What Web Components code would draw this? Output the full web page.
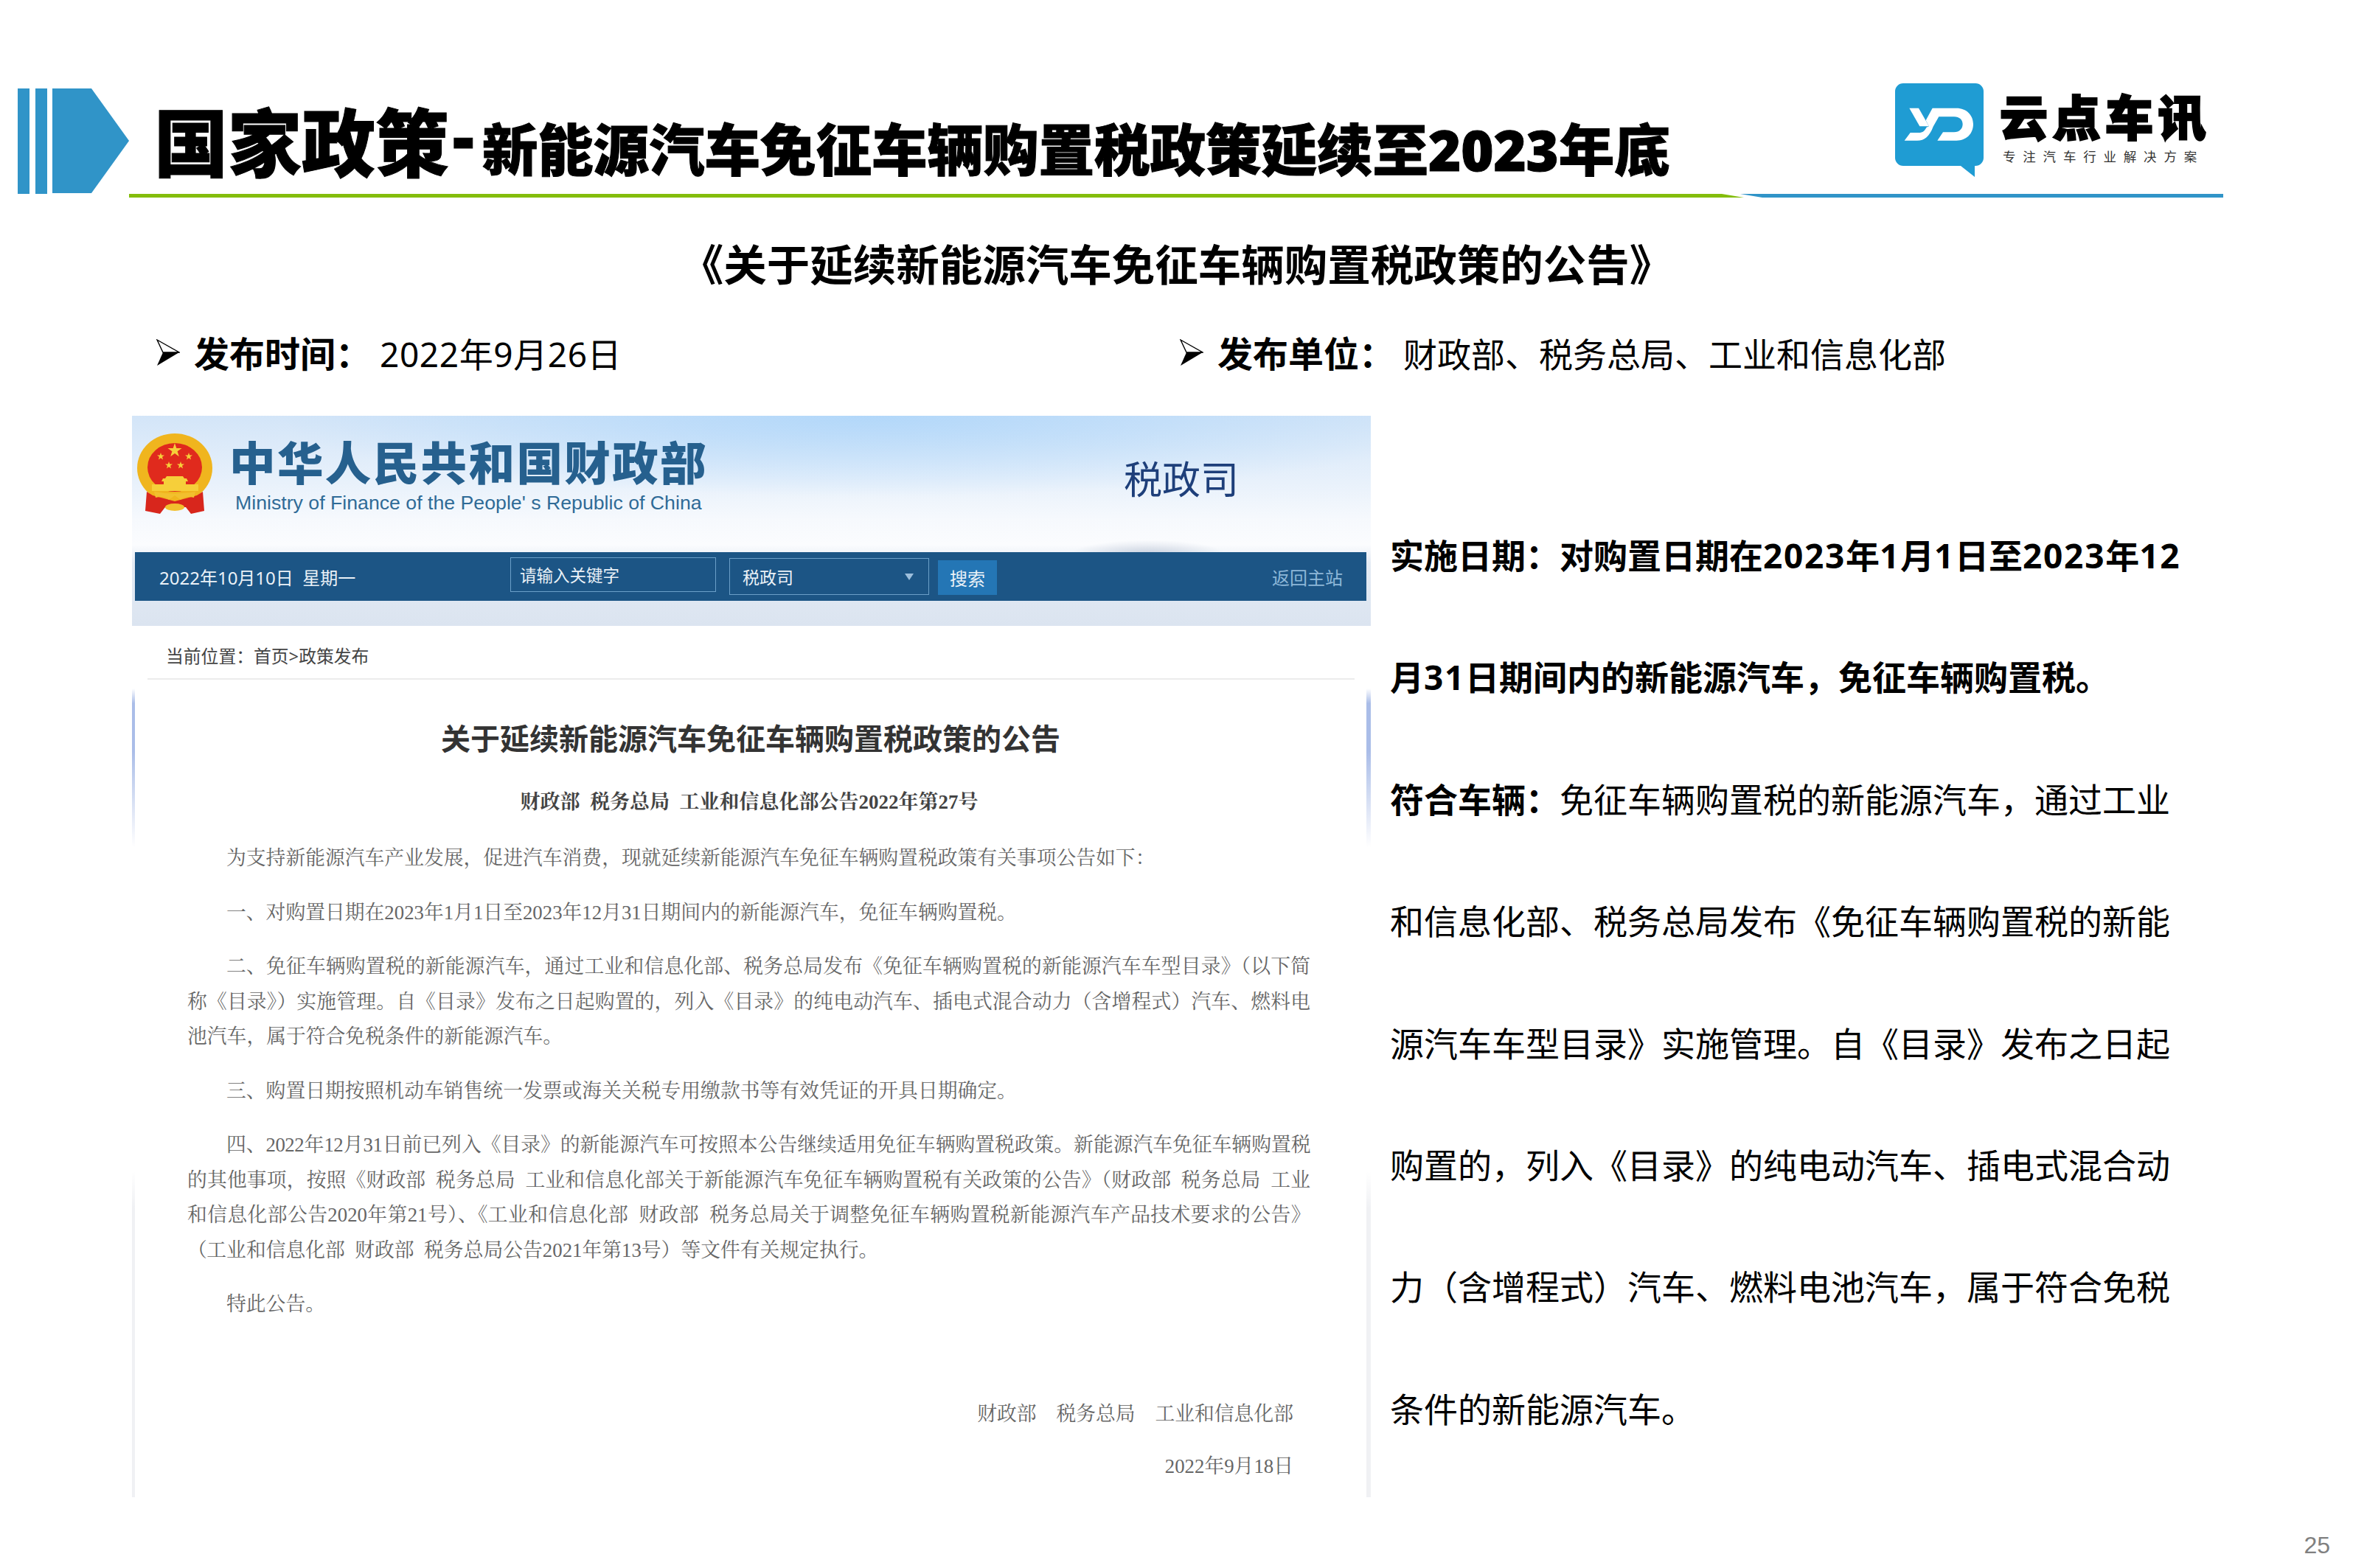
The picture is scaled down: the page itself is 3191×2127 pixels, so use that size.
<!DOCTYPE html>
<html lang="zh-CN">
<head>
<meta charset="utf-8">
<title>国家政策</title>
<style>
html,body{margin:0;padding:0;background:#fff}
body{width:3191px;height:2127px;overflow:hidden;font-family:"Noto Sans","Noto Sans CJK SC",sans-serif}
</style>
</head>
<body>
<policy-slide>
  <slide-header></slide-header>
  <slide-heading>《关于延续新能源汽车免征车辆购置税政策的公告》</slide-heading>
  <meta-row>
    <meta-item label="发布时间&#xFF1A;"><span style="letter-spacing:.6px">2022年9月26日</span></meta-item>
    <meta-item label="发布单位&#xFF1A;">财政部、税务总局、工业和信息化部</meta-item>
  </meta-row>
  <slide-body>
    <gov-document></gov-document>
    <side-notes></side-notes>
  </slide-body>
  <page-number>25</page-number>
</policy-slide>
<script>
function define(name, css, html){
  customElements.define(name, class extends HTMLElement{
    constructor(){
      super();
      this.attachShadow({mode:'open'}).innerHTML='<style>'+css+'</style>'+html;
    }
    connectedCallback(){
      const l=this.shadowRoot.querySelector('[data-label]');
      if(l) l.textContent=this.getAttribute('label')||'';
    }
  });
}
const CJK='"Noto Sans","Noto Sans CJK SC",sans-serif';
const SERIF='"Liberation Serif","Noto Serif CJK SC","Noto Sans CJK SC",serif';

define('policy-slide',`:host{display:flex;flex-direction:column;width:3191px;height:2127px;padding-top:120px;box-sizing:border-box;color:#000;font-family:${CJK}}`,`<slot></slot>`);

define('slide-header',`
:host{display:block}
.row{display:flex;height:143px}
.accent{display:flex;width:151px;margin-left:24px;flex:none}
.title{margin-left:34px;flex:1;display:flex;align-items:baseline;font-weight:900;white-space:nowrap;padding-top:25px;line-height:96px;-webkit-text-stroke:1px #000}
.big{font-size:100px}
.dash{font-size:90px;margin:0 0 0 5px;transform:translateY(-14px)}
.sub{font-size:75.6px;letter-spacing:-.1px;margin-left:11px}
.logo{display:flex;width:445px;margin-right:176px;flex:none;margin-top:-7px;gap:20px}
.lt{display:flex;flex-direction:column}
.cn{font-size:65px;line-height:80px;font-weight:900;letter-spacing:6.5px;white-space:nowrap;-webkit-text-stroke:2.5px #000;margin-top:6px}
.tag{font-size:17.5px;line-height:24px;letter-spacing:9.8px;color:#333;white-space:nowrap;margin:1px 0 0 4px}
.rule{display:flex;margin-left:175px;width:2840px;height:5px}
.g{width:2190px;flex:none;background:#84bd0c;clip-path:polygon(0 0,2160px 0,100% 100%,0 100%)}
.b{flex:1;margin-left:-5px;background:#3094c8;clip-path:polygon(0 0,100% 0,100% 100%,30px 100%)}
`,`
<div class="row">
  <svg class="accent" viewBox="24 120 151 143" width="151" height="143" aria-hidden="true">
    <rect x="24" y="120" width="16" height="143" fill="#3094c8"/>
    <rect x="48" y="120" width="16" height="143" fill="#3094c8"/>
    <polygon points="71,120 124,120 175,191 124,262 71,262" fill="#3094c8"/>
  </svg>
  <div class="title"><span class="big">国家政策</span><span class="dash">-</span><span class="sub">新能源汽车免征车辆购置税政策延续至2023年底</span></div>
  <div class="logo">
    <svg width="122" height="130" viewBox="0 0 122 130" style="flex:none" aria-hidden="true">
      <path d="M11 0H109A11 11 0 0 1 120 11V101A11 11 0 0 1 109 112H108V127L89 112H11A11 11 0 0 1 0 101V11A11 11 0 0 1 11 0Z" fill="#1f9cd3"/>
      <g transform="translate(0 17) scale(.3333)" fill="#fff">
        <path d="M58 50H96L138 124H100Z"/>
        <path d="M152 50H250C290 50 318 78 318 115C318 155 290 182 250 182H172L195 148H240C262 148 275 134 275 115C275 98 262 85 240 85H178L155 125C140 165 120 182 90 182H38L62 150H95C110 150 118 146 128 128L138 124L125 100Z"/>
      </g>
    </svg>
    <div class="lt"><div class="cn">云点车讯</div><div class="tag">专注汽车行业解决方案</div></div>
  </div>
</div>
<div class="rule"><div class="g"></div><div class="b"></div></div>
`);

define('slide-heading',`:host{display:block;text-align:center;font-size:58.5px;font-weight:700;line-height:92px;margin-top:44px;white-space:nowrap}`,`<slot></slot>`);

define('meta-row',`:host{display:grid;grid-template-columns:1388px 1fr;margin:46px 0 0 212px;height:60px}`,`<slot></slot>`);
define('meta-item',`
:host{display:flex;align-items:center;font-size:46px;line-height:60px;white-space:nowrap}
svg{flex:none;margin:-4px 19px 0 0}
b{font-weight:700;margin-right:12px;font-size:48px}
`,`<svg width="32" height="37" viewBox="0 0 32 37" aria-hidden="true"><path d="M1 1L31 18H9Z" fill="#fff" stroke="#000" stroke-width="1.4" stroke-linejoin="miter"/><path d="M1 36L9 18H31Z" fill="#000"/></svg><b data-label></b><slot></slot>`);

define('slide-body',`:host{display:grid;grid-template-columns:1680px 1090px;column-gap:26px;margin:54px 0 0 179px}`,`<slot></slot>`);

define('gov-document',`
:host{display:block;width:1680px;height:1467px;font-family:${CJK};
 background:
  radial-gradient(ellipse 140px 26px at 1378px 188px,rgba(150,165,190,.45),transparent 75%),
  radial-gradient(ellipse 800px 110px at 1000px 0,rgba(170,212,250,.8),transparent 100%),
  linear-gradient(180deg,#d3e5f8 0,#e8f1fb 90px,#f6f9fd 140px,#fbfcfe 175px,#e4ebf4 200px,#dbe4f0 285px)}
.top{height:185px;display:flex;align-items:flex-start;box-sizing:border-box}
.emb{margin:16px 0 0 0;flex:none}
.names{margin:31px 0 0 12px;width:1100px;flex:none}
.cn{font-size:62.5px;line-height:66px;font-weight:900;letter-spacing:2.4px;color:#26608e;white-space:nowrap}
.en{font-family:"Liberation Sans",sans-serif;font-size:26.7px;line-height:32px;color:#2f6b97;margin:5px 0 0 8px;white-space:nowrap}
.dept{font-size:52px;line-height:60px;font-weight:400;color:#1e3f7a;margin:56px 0 0 113px;white-space:nowrap}
.nav{height:66px;margin:0 6px 0 4px;background:#1c5585;display:flex;align-items:center;color:#eaf1f7;font-size:24px;box-sizing:border-box;white-space:nowrap}
.date{margin-left:33px;width:476px;font-size:24px;flex:none}
.input{width:279px;height:47px;box-sizing:border-box;border:1px solid #6b9fc8;display:flex;align-items:center;padding-left:12px;flex:none;font-size:22.5px;margin-top:-6px}
.sel{width:271px;height:50px;box-sizing:border-box;border:1px solid #6b9fc8;display:flex;align-items:center;justify-content:space-between;padding:0 20px 0 17px;margin-left:18px;flex:none;font-size:23px;margin-top:0}
.sel i{width:0;height:0;border:6px solid transparent;border-top:9px solid #9dbfdc;border-bottom:0}
.btn{width:80px;height:47px;background:#2476b5;display:flex;align-items:center;justify-content:center;margin-left:12px;flex:none;margin-top:2px}
.back{margin-left:auto;margin-right:32px;color:#8db7d8}
.gap{height:34px}
.strip{padding:0 6px 0 4px;background:linear-gradient(180deg,#fff 0,#fff 85px,#aabde8 105px,#aabde8 170px,#dfe6f6 250px,#fff 300px,#fff 740px,#f0f1f4 790px,#f0f1f4 100%)}
.panel{height:1182px;background:#fff;color:#666}
.crumb{height:71px;margin:0 16px 0 17px;border-bottom:2px solid #ececec;font-size:23.8px;line-height:82px;padding-left:25px;color:#444;white-space:nowrap}
h1{margin:50px 0 0;text-align:center;font-size:40px;line-height:60px;font-weight:700;color:#333}
.num{margin-top:34px;text-align:center;font-family:${SERIF};font-size:27px;line-height:44px;font-weight:700;color:#444;white-space:pre;padding-right:4px}
.text{margin:31px 76px 0 71px;font-family:${SERIF};font-size:26.8px;line-height:47.5px;color:#666}
.text p{margin:0 0 26px;text-indent:53px;text-align:justify;white-space:pre-wrap}
.text p.four::first-line{letter-spacing:-.5px}
.sign{margin:0 99px 0 0;font-family:${SERIF};font-size:26.8px;line-height:48px;text-align:right;color:#666;white-space:pre}
.sign div:first-child{margin-top:100px}
.sign div+div{margin-top:23px}
`,`
<div class="top">
  <svg class="emb" width="120" height="125" viewBox="0 0 120 125" aria-hidden="true">
    <ellipse cx="58" cy="55" rx="51" ry="47" fill="#f0b51e"/>
    <ellipse cx="58" cy="54" rx="37" ry="33" fill="#e02a1d"/>
    <g fill="#f6cf3a">
      <polygon points="58,21 60.300,28 67.500,28 61.600,32.300 63.800,39.200 58,35 52.200,39.200 54.400,32.300 48.500,28 55.700,28"/>
      <polygon points="39,34 40.200,37.500 44,37.500 41,39.800 42,43.500 39,41.200 36,43.500 37,39.800 34,37.500 37.800,37.500"/>
      <polygon points="77,34 78.200,37.500 82,37.500 79,39.800 80,43.500 77,41.200 74,43.500 75,39.800 72,37.500 75.800,37.500"/>
      <polygon points="50,46 51.200,49.500 55,49.500 52,51.800 53,55.500 50,53.200 47,55.500 48,51.800 45,49.500 48.800,49.500"/>
      <polygon points="66,46 67.200,49.500 71,49.500 68,51.800 69,55.500 66,53.200 63,55.500 64,51.800 61,49.500 64.800,49.500"/>
      <path d="M47 66H69L71 69H74L76 73H73V77H90V86H27V77H43V73H40L42 69H45Z"/>
    </g>
    <path d="M20 87L18 113L38 117L45 108H73L80 117L98 113L96 87L88 92L58 100L28 92Z" fill="#d8261c"/>
    <path d="M30 87Q58 92 86 87L84 95Q72 92 66 98L58 92L50 98Q44 92 32 95Z" fill="#f2c02e"/>
    <ellipse cx="58" cy="108" rx="13" ry="5" fill="#f2c02e"/>
  </svg>
  <div class="names"><div class="cn">中华人民共和国财政部</div><div class="en">Ministry of Finance of the People' s Republic of China</div></div>
  <div class="dept">税政司</div>
</div>
<div class="nav">
  <div class="date">2022年10月10日&nbsp; 星期一</div>
  <div class="input">请输入关键字</div>
  <div class="sel"><span>税政司</span><i></i></div>
  <div class="btn">搜索</div>
  <div class="back">返回主站</div>
</div>
<div class="gap"></div>
<div class="strip"><div class="panel">
  <div class="crumb">当前位置&#xFF1A;首页&gt;政策发布</div>
  <h1>关于延续新能源汽车免征车辆购置税政策的公告</h1>
  <div class="num">财政部  税务总局  工业和信息化部公告2022年第27号</div>
  <div class="text">
    <p>为支持新能源汽车产业发展&#xFF0C;促进汽车消费&#xFF0C;现就延续新能源汽车免征车辆购置税政策有关事项公告如下&#xFF1A;</p>
    <p>一、对购置日期在2023年1月1日至2023年12月31日期间内的新能源汽车&#xFF0C;免征车辆购置税。</p>
    <p>二、免征车辆购置税的新能源汽车&#xFF0C;通过工业和信息化部、税务总局发布《免征车辆购置税的新能源汽车车型目录》&#xFF08;以下简称《目录》&#xFF09;实施管理。自《目录》发布之日起购置的&#xFF0C;列入《目录》的纯电动汽车、插电式混合动力&#xFF08;含增程式&#xFF09;汽车、燃料电池汽车&#xFF0C;属于符合免税条件的新能源汽车。</p>
    <p>三、购置日期按照机动车销售统一发票或海关关税专用缴款书等有效凭证的开具日期确定。</p>
    <p class="four">四、2022年12月31日前已列入《目录》的新能源汽车可按照本公告继续适用免征车辆购置税政策。新能源汽车免征车辆购置税的其他事项&#xFF0C;按照《财政部  税务总局  工业和信息化部关于新能源汽车免征车辆购置税有关政策的公告》&#xFF08;财政部  税务总局  工业和信息化部公告2020年第21号&#xFF09;、《工业和信息化部  财政部  税务总局关于调整免征车辆购置税新能源汽车产品技术要求的公告》&#xFF08;工业和信息化部  财政部  税务总局公告2021年第13号&#xFF09;等文件有关规定执行。</p>
    <p>特此公告。</p>
  </div>
  <div class="sign"><div>财政部    税务总局    工业和信息化部</div><div>2022年9月18日</div></div>
</div></div>
`);

define('side-notes',`
:host{display:block;padding-top:107px;font-size:46px;line-height:165.4px;color:#000}
b{font-weight:700}
i{font-style:normal;letter-spacing:1.7px}
`,`<b>实施日期&#xFF1A;对购置日期在<i>2023</i>年<i>1</i>月<i>1</i>日至<i>2023</i>年<i>12</i>月<i>31</i>日期间内的新能源汽车&#xFF0C;免征车辆购置税。</b><br><b>符合车辆&#xFF1A;</b>免征车辆购置税的新能源汽车&#xFF0C;通过工业和信息化部、税务总局发布《免征车辆购置税的新能源汽车车型目录》实施管理。自《目录》发布之日起购置的&#xFF0C;列入《目录》的纯电动汽车、插电式混合动力&#xFF08;含增程式&#xFF09;汽车、燃料电池汽车&#xFF0C;属于符合免税条件的新能源汽车。`);

define('page-number',`:host{display:block;align-self:flex-end;margin:45px 31px 0 0;font-family:"Liberation Sans",sans-serif;font-size:32px;line-height:40px;color:#808080}`,`<slot></slot>`);
</script>
</body>
</html>
